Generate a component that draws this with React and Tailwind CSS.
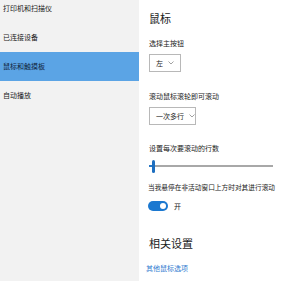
import React from "react";

const font = { fontFamily: '"Noto Sans CJK SC", "Noto Sans", sans-serif' };

const navItems = [
  { label: "打印机和扫描仪" },
  { label: "已连接设备" },
  { label: "鼠标和触摸板", active: true },
  { label: "自动播放" },
];

const Chevron = () => (
  <svg width="6" height="4" viewBox="0 0 6 4" className="ml-[5px]">
    <path d="M0.5 0.5 L3 3 L5.5 0.5" fill="none" stroke="#8a8a8a" strokeWidth="0.8" />
  </svg>
);

const Select = ({ value, width }) => (
  <div
    className={`inline-flex items-center h-[18px] pl-[6px] border border-[#b8b8b8] bg-white text-[7px] leading-[9px] text-[#222] ${width}`}
  >
    {value}
    <Chevron />
  </div>
);

export default function App() {
  return (
    <div className="w-[285px] h-[285px] flex items-start bg-white overflow-hidden" style={font}>
      {/* Sidebar */}
      <div className="w-[139px] h-[281px] bg-[#f2f2f2] flex flex-col">
        <div className="-mt-[6px] flex flex-col">
          {navItems.map((item) => (
            <div
              key={item.label}
              className={`h-[29px] flex items-center pl-[3px] text-[7px] leading-[9px] text-[#1a1a1a] ${item.active ? "bg-[#5ba4e5] text-[#10223a]" : ""}`}
            >
              {item.label}
            </div>
          ))}
        </div>
      </div>

      {/* Content */}
      <div className="flex-1 pl-[10px] pt-[11px] flex flex-col items-start text-[#1a1a1a]">
        <div className="text-[11px] leading-[14px]">鼠标</div>
        <div className="mt-[14px] text-[7px] leading-[9px]">选择主按钮</div>
        <div className="mt-[6px] flex">
          <Select value="左" width="w-[32px]" />
        </div>

        <div className="mt-[20px] text-[7px] leading-[9px]">滚动鼠标滚轮即可滚动</div>
        <div className="mt-[6px] flex">
          <Select value="一次多行" width="w-[47px]" />
        </div>

        <div className="mt-[19px] text-[7px] leading-[9px]">设置每次要滚动的行数</div>
        <div className="relative mt-[6px] w-[124px] h-[14px] flex items-center">
          <div className="w-full h-[2px] bg-[#a8a8a8]" />
          <div className="absolute left-0 w-[5px] h-[2px] bg-[#2a78c4]" />
          <div className="absolute left-[3px] w-[3px] h-[13px] rounded-full bg-[#1e6fc0]" />
        </div>

        <div className="mt-[10px] -ml-[1px] text-[6.7px] leading-[9px] whitespace-nowrap">当我悬停在非活动窗口上方时对其进行滚动</div>
        <div className="mt-[9px] -ml-[1px] flex items-center">
          <div className="w-[20px] h-[10px] rounded-full bg-[#1b78d0] flex items-center justify-end pr-[2px]">
            <div className="w-[6px] h-[6px] rounded-full bg-white" />
          </div>
          <span className="ml-[6px] text-[7px] leading-[9px]">开</span>
        </div>

        <div className="mt-[25px] text-[11px] leading-[14px]">相关设置</div>
        <div className="mt-[14px] -ml-[3px] text-[7px] leading-[9px] text-[#2f7bd0]">其他鼠标选项</div>
      </div>
    </div>
  );
}
